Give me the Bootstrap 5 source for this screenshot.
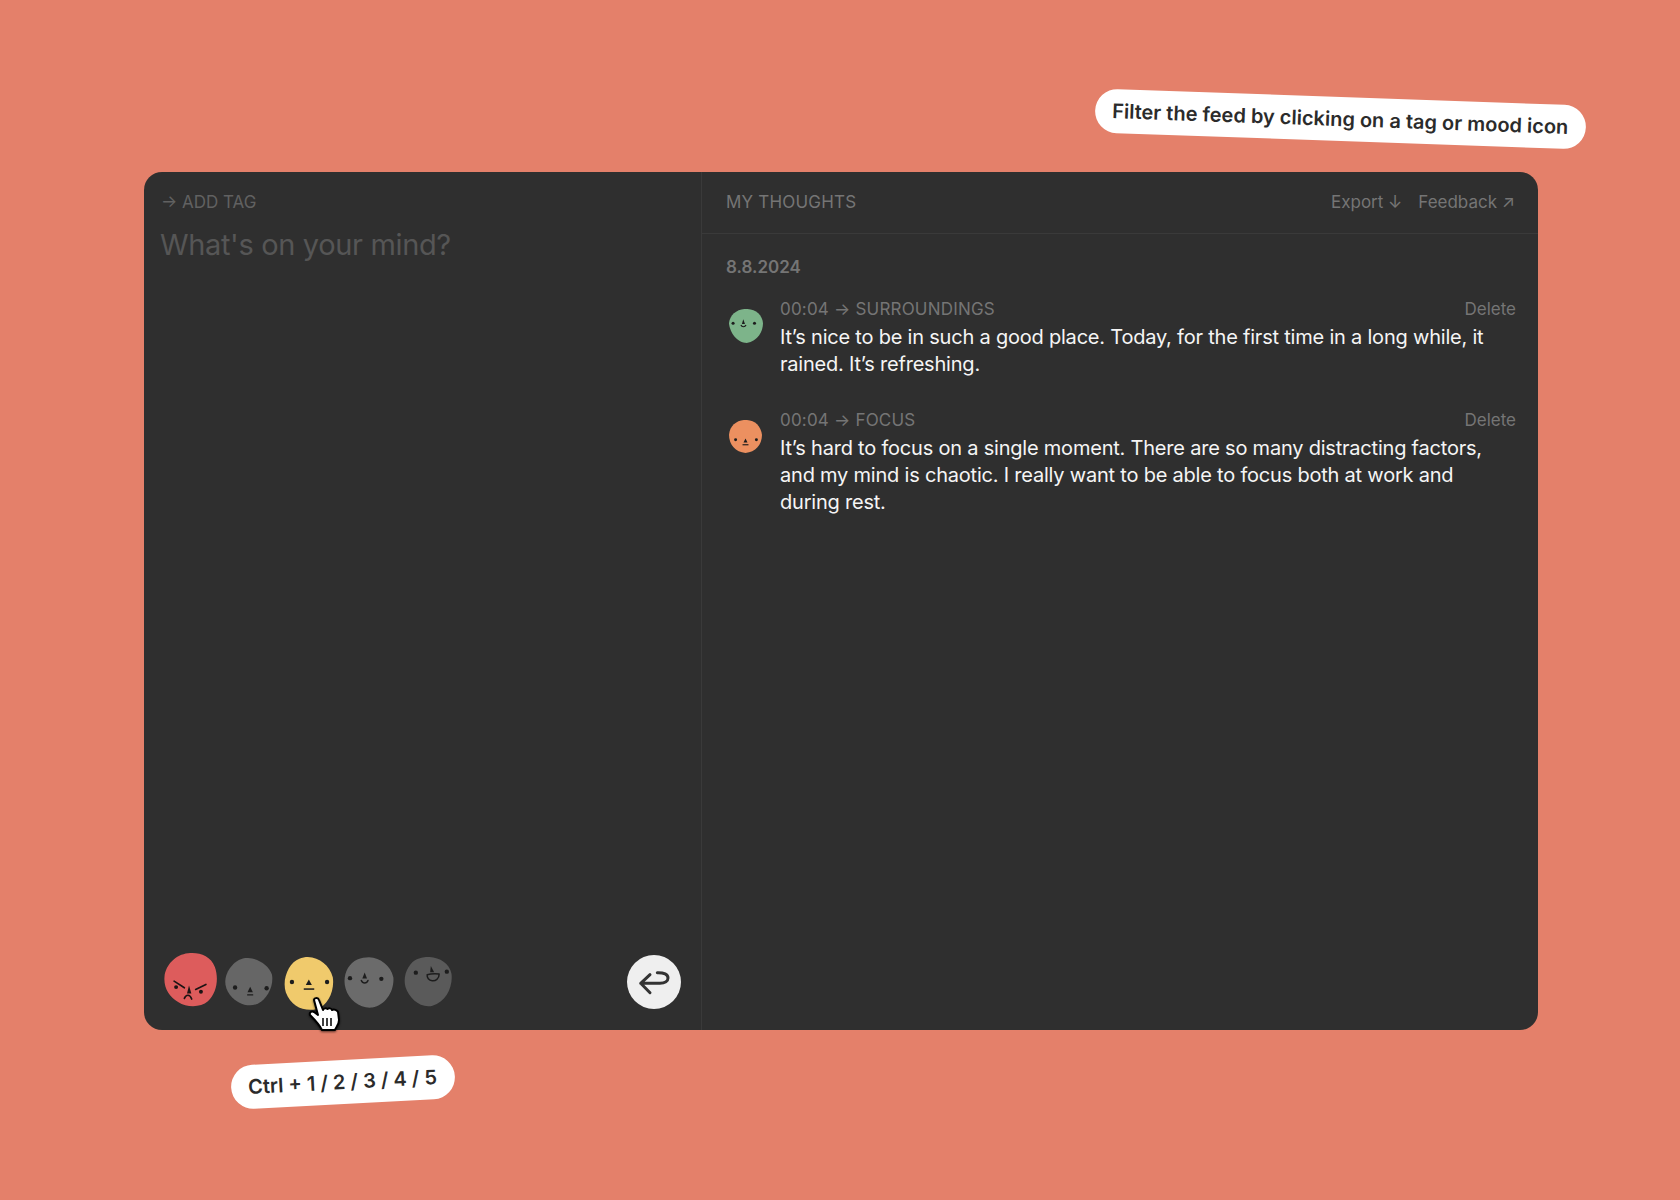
<!DOCTYPE html>
<html lang="en">
<head>
    <meta charset="UTF-8">
    <meta name="viewport" content="width=device-width, initial-scale=1.0">
    <title>My thoughts</title>
    <link rel="stylesheet" href="https://cdn.jsdelivr.net/npm/bootstrap@5.3.3/dist/css/bootstrap.min.css">
    <style>
        body { background: #e4806a; font-family: Inter, "Liberation Sans", sans-serif; min-height: 1200px; }
        .stage { position: relative; width: 1680px; height: 1200px; padding: 172px 142px 0 144px; }
        .journal { height: 858px; background: #2f2f2f; border-radius: 18px; overflow: hidden; }
        .composer { flex: none; width: 558px; padding: 18px 20px 20px 16px; border-right: 1px solid #3a3a3a; }
        .label-sm { font-size: 17px; line-height: 24px; color: #757575; }
        .label-caps { letter-spacing: .2px; }
        .label-dim { color: #616161; padding-left: 1px; }
        .prompt { font-size: 29px; letter-spacing: -.35px; line-height: 40px; color: #565656; margin-top: 11px; }
        .moods { margin-left: 4px; }
        .moods svg:nth-child(2) { margin-left: 7px; }
        .moods svg:nth-child(3) { margin-left: 11px; margin-top: 3px; }
        .moods svg:nth-child(4) { margin-left: 10px; margin-top: 1px; }
        .moods svg:nth-child(5) { margin-left: 10px; margin-top: 1px; }
        .mood-high { margin-bottom: 3px; }
        .send-btn { width: 54px; height: 54px; background: #efefef; border: 0; border-radius: 50%; padding: 0; }
        .feed-head { height: 62px; padding: 0 23px 2px 24px; border-bottom: 1px solid #3a3a3a; }
        .feed-date { font-size: 17px; font-weight: 600; line-height: 24px; color: #757575; margin: 21px 0 0 24px; }
        .entry { padding: 0 22px 0 27px; margin-top: 18px; gap: 17px; }
        .entry + .entry { margin-top: 30px; }
        .entry-face { margin-top: 12px; flex: none; }
        .entry-text { font-size: 20px; line-height: 27px; color: #f5f5f5; letter-spacing: -.21px; margin-top: 3px; padding-right: 12px; }
        .hint { position: absolute; background: #fff; color: #2b2b2b; border-radius: 24px; font-size: 20px; font-weight: 560; line-height: 24px; padding: 10px 18px 10px 17px; white-space: nowrap; }
        .hint-filter { left: 1095px; top: 97px; transform: rotate(2deg); }
        .hint-keys { left: 231px; top: 1060px; transform: rotate(-3deg); }
        .pointer { position: absolute; left: 308px; top: 996px; filter: drop-shadow(0 1px 1px rgba(0,0,0,.6)); }
    </style>
</head>
<body>
    <div class="stage">
        <div class="journal d-flex">
            <div class="composer d-flex flex-column">
                <div class="label-sm label-dim">→ ADD TAG</div>
                <div class="prompt">What's on your mind?</div>
                <div class="d-flex justify-content-between align-items-center mt-auto">
                    <div class="moods d-flex align-items-center">
                        <svg class="mood-high" width="54" height="54" viewBox="0 0 162 163"><path fill="#dd5c5c" d="M72 1C105-3 140 8 153 42 165 75 160 120 132 146 110 165 70 166 42 148 15 132-2 105 1 72 5 35 35 5 72 1Z"/><g fill="none" stroke="#1d1414" stroke-width="5" stroke-linecap="round"><path d="M30 85 61 105M126 95 95 110M61 137C66 124 78 124 83 139"/></g><path fill="#1d1414" d="M75 98 82 122H69Z"/><circle cx="36" cy="103" r="6" fill="#1d1414"/><circle cx="111" cy="117" r="6" fill="#1d1414"/></svg>
                        <svg width="48" height="48" viewBox="0 0 143 143"><path fill="#666" d="M60 0C95-2 130 20 140 50 146 85 125 120 100 135 70 150 35 135 15 110-5 85-3 55 15 30 28 12 42 3 60 0Z"/><circle cx="30" cy="88" r="6.500" fill="#1d1d1d"/><circle cx="124" cy="90" r="6.500" fill="#1d1d1d"/><path fill="#1d1d1d" d="M75 86 83 102H67Z"/><path stroke="#1d1d1d" stroke-width="4" d="M66 110H84"/></svg>
                        <svg width="50" height="53" viewBox="0 0 147 157"><path fill="#f0ca6c" d="M70 0C105 2 135 25 144 60 150 100 130 145 95 155 55 162 20 145 5 105-8 65 15 15 45 5 53 2 62 0 70 0Z"/><circle cx="23" cy="74" r="6.500" fill="#1d1d1d"/><circle cx="127" cy="74" r="6.500" fill="#1d1d1d"/><path fill="#1d1d1d" d="M73 67 82 83H64Z"/><path stroke="#1d1d1d" stroke-width="4.500" d="M58 95H89"/></svg>
                        <svg width="50" height="51" viewBox="0 0 150 152"><path fill="#6b6b6b" d="M75 0C110 2 140 25 148 60 152 100 125 145 85 151 50 155 15 130 5 95-6 60 10 20 40 7 52 2 63 0 75 0Z"/><circle cx="18" cy="63" r="6.500" fill="#1d1d1d"/><circle cx="112" cy="65" r="6.500" fill="#1d1d1d"/><path fill="#1d1d1d" d="M62 46 69 64H55Z"/><path fill="none" stroke="#1d1d1d" stroke-width="4.500" stroke-linecap="round" d="M52 70C56 80 68 80 72 70"/></svg>
                        <svg width="48" height="50" viewBox="0 0 143 150"><path fill="#5a5a5a" d="M65 0C100-2 135 15 142 50 147 90 125 135 85 146 50 155 15 125 4 90-6 55 15 15 40 6 48 3 56 1 65 0Z"/><circle cx="35" cy="47" r="6.500" fill="#1d1d1d"/><circle cx="128" cy="44" r="6.500" fill="#1d1d1d"/><path fill="#1d1d1d" d="M80 27 90 46H78Z"/><path fill="none" stroke="#1d1d1d" stroke-width="4.500" stroke-linejoin="round" d="M69 53C80 50 95 50 105 51 105 66 94 72 84 71 74 70 68 62 69 53Z"/></svg>
                    </div>
                    <button class="send-btn d-flex align-items-center justify-content-center" type="button" aria-label="Save">
                        <svg width="54" height="54" viewBox="0 0 54 54" fill="none" stroke="#333" stroke-width="3" stroke-linecap="round" stroke-linejoin="round"><path d="M23 19.700 13.700 28.300 23 37.700M13.700 28.300H33C38 28.300 41 26 41 23 41 19.500 37 17.500 30.300 17.700"/></svg>
                    </button>
                </div>
            </div>
            <div class="flex-grow-1 d-flex flex-column">
                <div class="feed-head d-flex justify-content-between align-items-center label-sm">
                    <span class="label-caps">MY THOUGHTS</span>
                    <span class="d-flex gap-3"><span>Export ↓</span><span>Feedback ↗</span></span>
                </div>
                <div class="feed-date">8.8.2024</div>
                <div class="entry d-flex">
                    <svg class="entry-face" width="34" height="34" viewBox="0 0 100 100"><path fill="#7db48a" d="M45 0C75-2 98 15 100 42 100 65 85 95 52 100 25 100 2 70 0 42 2 18 22 2 45 0Z"/><circle cx="12" cy="42" r="4.500" fill="#1d1d1d"/><circle cx="75" cy="42" r="4.500" fill="#1d1d1d"/><path fill="#1d1d1d" d="M42 30 47 44H38Z"/><path fill="none" stroke="#1d1d1d" stroke-width="3.500" d="M35 47C38 54 47 54 50 47"/></svg>
                    <div class="flex-grow-1">
                        <div class="d-flex justify-content-between label-sm"><span class="label-caps">00:04 → SURROUNDINGS</span><span>Delete</span></div>
                        <div class="entry-text">It’s nice to be in such a good place. Today, for the first time in a long while, it rained. It’s refreshing.</div>
                    </div>
                </div>
                <div class="entry d-flex">
                    <svg class="entry-face" width="34" height="34" viewBox="0 0 103 103"><path fill="#ec9060" d="M45 0C75-2 96 15 100 45 100 75 80 98 50 100 20 98 0 75 0 45 2 18 22 2 45 0Z"/><circle cx="20" cy="60" r="4.500" fill="#1d1d1d"/><circle cx="83" cy="60" r="4.500" fill="#1d1d1d"/><path fill="#1d1d1d" d="M50 56 56 68H44Z"/><path stroke="#1d1d1d" stroke-width="3.500" d="M41 75H59"/></svg>
                    <div class="flex-grow-1">
                        <div class="d-flex justify-content-between label-sm"><span class="label-caps">00:04 → FOCUS</span><span>Delete</span></div>
                        <div class="entry-text">It’s hard to focus on a single moment. There are so many distracting factors, and my mind is chaotic. I really want to be able to focus both at work and during rest.</div>
                    </div>
                </div>
            </div>
        </div>
        <div class="hint hint-filter">Filter the feed by clicking on a tag or mood icon</div>
        <div class="hint hint-keys">Ctrl + 1 / 2 / 3 / 4 / 5</div>
        <svg class="pointer" width="34" height="38" viewBox="0 0 34 38"><path fill="#fff" stroke="#000" stroke-width="2" stroke-linejoin="round" d="M6 4C6 2 10 1 11 4L15 14C16 12 18 12 19.500 13 21 12 23 12 24 14 26 13 29 14 30 16L31 24C31 29 28 31 27 34H14C12 30 9 26 2 19 1 16 4 15 6 16L10 19Z"/><path stroke="#000" stroke-width="1.500" d="M15 22V30M19 22V30M23 22V30"/></svg>
    </div>
    <script src="https://cdn.jsdelivr.net/npm/bootstrap@5.3.3/dist/js/bootstrap.bundle.min.js"></script>
</body>
</html>
